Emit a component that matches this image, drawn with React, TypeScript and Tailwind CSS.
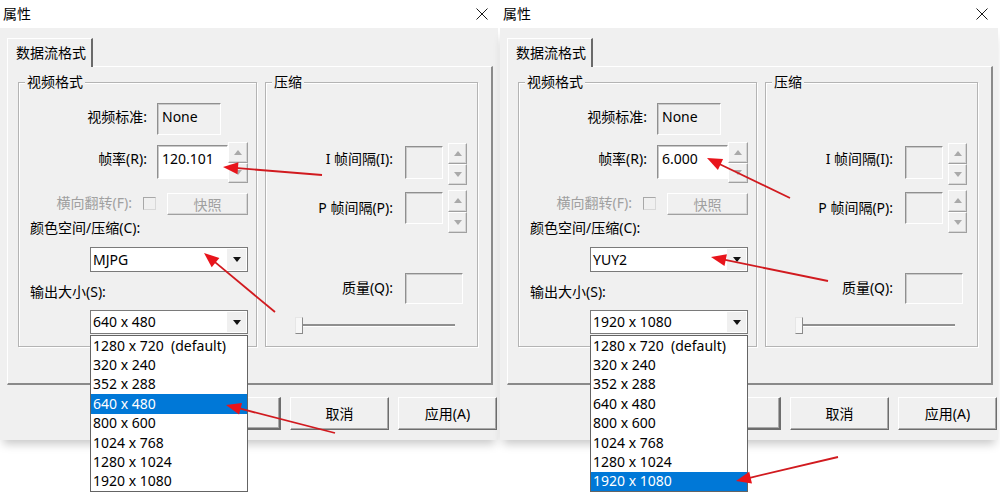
import React from "react";

const SIZES = [
  "1280 x 720  (default)",
  "320 x 240",
  "352 x 288",
  "640 x 480",
  "800 x 600",
  "1024 x 768",
  "1280 x 1024",
  "1920 x 1080",
];

// classic 3D edges
const sunken =
  "border border-t-[#8f8f8f] border-l-[#8f8f8f] border-r-white border-b-white shadow-[inset_1px_1px_0_#c9c9c9]";
const raised =
  "border border-t-white border-l-white border-r-[#a0a0a0] border-b-[#a0a0a0] shadow-[inset_-1px_-1px_0_#d6d6d6]";
const etched =
  "border border-[#b4b4b4] shadow-[inset_1px_1px_0_#ffffff,1px_1px_0_#ffffff]";

function SpinBtn({ up }: { up: boolean }) {
  return (
    <div className={`flex-1 flex items-center justify-center bg-[#f0f0f0] ${raised}`}>
      <svg width="8" height="5" viewBox="0 0 8 5">
        <polygon points={up ? "4,0 8,5 0,5" : "0,0 8,0 4,5"} fill="#a9a9a9" />
      </svg>
    </div>
  );
}

function Spinner({ className }: { className: string }) {
  return (
    <div className={`flex flex-col ${className}`}>
      <SpinBtn up />
      <SpinBtn up={false} />
    </div>
  );
}

function Combo({
  value,
  className,
  children,
}: {
  value: string;
  className: string;
  children?: React.ReactNode;
}) {
  return (
    <div className={`relative flex bg-white border border-[#7a7a7a] ${className}`}>
      <span className="flex-1 pl-[2px] flex items-center leading-[18px]">{value}</span>
      <div className="w-[19px] my-[1px] mr-[1px] flex items-center justify-center bg-[#f0f0f0]">
        <svg width="8" height="5" viewBox="0 0 8 5">
          <polygon points="0,0 8,0 4,5" fill="#111" />
        </svg>
      </div>
      {children}
    </div>
  );
}

function SizeList({ selected }: { selected: number }) {
  return (
    <div className="absolute left-[-1px] right-[-1px] top-[24px] z-20 bg-white border border-[#646464]">
      {SIZES.map((s, i) => (
        <div
          key={s}
          className={`h-[19.4px] pl-[2px] flex items-center whitespace-pre leading-[18px] ${
            i === selected ? "bg-[#0078d7] text-white" : "text-black"
          }`}
        >
          {s}
        </div>
      ))}
    </div>
  );
}

function DlgButton({ label, className }: { label: string; className?: string }) {
  return (
    <div
      className={`w-[99px] h-[33px] flex items-center justify-center bg-[#f0f0f0] border border-t-white border-l-white border-r-[#6d6d6d] border-b-[#6d6d6d] shadow-[inset_-1px_-1px_0_#a9a9a9] ${
        className ?? ""
      }`}
    >
      {label}
    </div>
  );
}

function Group({
  title,
  className,
  children,
}: {
  title: string;
  className: string;
  children: React.ReactNode;
}) {
  return (
    <div className={`relative flex flex-col ${etched} ${className}`}>
      <span className="absolute left-[6px] top-[-10px] px-[2px] bg-[#f0f0f0] leading-[18px]">
        {title}
      </span>
      {children}
    </div>
  );
}

function Dialog({
  fps,
  codec,
  size,
  selected,
}: {
  fps: string;
  codec: string;
  size: string;
  selected: number;
}) {
  return (
    <div className="w-[500px] h-[500px] flex flex-col">
      {/* title bar */}
      <div className="h-[28px] bg-white flex items-center justify-between pl-[3px] pr-[12px]">
        <span className="leading-[18px]">属性</span>
        <svg width="12" height="12" viewBox="0 0 12 12">
          <path d="M0.5 0.5 L11.5 11.5 M11.5 0.5 L0.5 11.5" stroke="#1a1a1a" strokeWidth="1" />
        </svg>
      </div>

      {/* client area */}
      <div className="relative h-[412px] w-[498px] bg-[#f0f0f0] pl-[7px] pr-[1px] pt-[10px] flex flex-col shadow-[0_7px_9px_-3px_rgba(0,0,0,0.22)]">
        {/* tab strip */}
        <div className="relative z-10 w-[86px] h-[29px] -mb-[1px] bg-[#f0f0f0] border-t border-l border-t-white border-l-white border-r-2 border-r-[#6a6a6a] pl-[8px] flex items-center leading-[18px]">
          数据流格式
        </div>

        {/* tab page */}
        <div className="w-[486px] h-[319px] border border-t-white border-l-white border-r-2 border-r-[#8a8a8a] border-b-2 border-b-[#8a8a8a] flex items-start pl-[10px] pt-[15px] gap-[8px]">
          <Group title="视频格式" className="w-[239px] h-[265px]">
            <div className="flex mt-[20px]">
              <span className="w-[128px] text-right mt-[5px] leading-[18px]">视频标准:</span>
              <div className={`ml-[10px] w-[64px] h-[32px] bg-[#f0f0f0] pl-[4px] pt-[4px] leading-[18px] ${sunken}`}>
                None
              </div>
            </div>

            <div className="flex mt-[7px]">
              <span className="w-[128px] text-right mt-[8px] leading-[18px]">帧率(R):</span>
              <div className={`ml-[10px] mt-[3px] w-[71px] h-[34px] bg-white pl-[4px] pt-[4px] leading-[18px] ${sunken}`}>
                {fps}
              </div>
              <Spinner className="w-[20px] h-[41px]" />
            </div>

            <div className="flex mt-[10px]">
              <span className="w-[113px] text-right mt-[1px] leading-[18px] text-[#a0a0a0]">横向翻转(F):</span>
              <div className="ml-[11px] mt-[4px] w-[13px] h-[13px] border border-t-[#a8a8a8] border-l-[#a8a8a8] border-r-[#d8d8d8] border-b-[#d8d8d8]" />
              <div className={`ml-[11px] w-[81px] h-[22px] flex items-center justify-center text-[#a0a0a0] bg-[#f0f0f0] ${raised}`}>
                快照
              </div>
            </div>

            <div className="ml-[11px] mt-[4px] leading-[18px]">颜色空间/压缩(C):</div>
            <Combo value={codec} className="ml-[71px] mt-[10px] w-[158px] h-[25px]" />

            <div className="ml-[11px] mt-[11px] leading-[18px]">输出大小(S):</div>
            <Combo value={size} className="ml-[71px] mt-[9px] w-[158px] h-[24px]">
              <SizeList selected={selected} />
            </Combo>
          </Group>

          <Group title="压缩" className="w-[213px] h-[265px]">
            <div className="flex mt-[60px]">
              <span className="w-[127px] text-right mt-[7px] leading-[18px]">I 帧间隔(I):</span>
              <div className={`ml-[12px] mt-[3px] w-[38px] h-[33px] bg-[#f0f0f0] ${sunken}`} />
              <Spinner className="ml-[5px] w-[19px] h-[42px]" />
            </div>

            <div className="flex mt-[5px]">
              <span className="w-[127px] text-right mt-[9px] leading-[18px]">P 帧间隔(P):</span>
              <div className={`ml-[12px] mt-[2px] w-[38px] h-[32px] bg-[#f0f0f0] ${sunken}`} />
              <Spinner className="ml-[5px] w-[19px] h-[43px]" />
            </div>

            <div className="flex mt-[40px]">
              <span className="w-[127px] text-right mt-[6px] leading-[18px]">质量(Q):</span>
              <div className={`ml-[12px] w-[58px] h-[31px] bg-[#f0f0f0] ${sunken}`} />
            </div>

            {/* trackbar */}
            <div className="flex ml-[29px] mt-[13px] h-[17px]">
              <div className="w-[8px] h-[17px] bg-[#f7f7f7] border border-t-[#e6e6e6] border-l-[#e6e6e6] border-r-[#8a8a8a] border-b-[#8a8a8a]" />
              <div className="w-[152px] h-[3px] mt-[7px] bg-[#f0f0f0] border-t-2 border-t-[#8f8f8f] border-b border-b-white" />
            </div>
          </Group>
        </div>

        {/* dialog buttons */}
        <div className="flex justify-end gap-[9px] mt-[12px]">
          <DlgButton label="确定" className="border-r-2 border-b-2 border-r-[#4a4a4a] border-b-[#4a4a4a]" />
          <DlgButton label="取消" />
          <DlgButton label="应用(A)" />
        </div>
      </div>
    </div>
  );
}

function Arrow({ x1, y1, x2, y2 }: { x1: number; y1: number; x2: number; y2: number }) {
  const dx = x2 - x1;
  const dy = y2 - y1;
  const len = Math.hypot(dx, dy);
  const ux = dx / len;
  const uy = dy / len;
  const hl = 15;
  const hw = 6;
  const bx = x2 - ux * hl;
  const by = y2 - uy * hl;
  const px = -uy;
  const py = ux;
  return (
    <g>
      <line x1={x1} y1={y1} x2={bx + ux * 3} y2={by + uy * 3} stroke="#d11a1f" strokeWidth={1.8} />
      <polygon
        points={`${x2},${y2} ${bx + px * hw},${by + py * hw} ${bx - px * hw},${by - py * hw}`}
        fill="#e8141b"
      />
    </g>
  );
}

export default function App() {
  return (
    <div className="relative w-[1000px] h-[500px] overflow-hidden bg-white flex text-[14px] text-black font-['Noto_Sans','Noto_Sans_CJK_SC',sans-serif]">
      <Dialog fps="120.101" codec="MJPG" size="640 x 480" selected={3} />
      <Dialog fps="6.000" codec="YUY2" size="1920 x 1080" selected={7} />

      {/* annotation arrows */}
      <svg className="absolute inset-0 z-30 pointer-events-none" width="1000" height="500">
        <Arrow x1={322} y1={175} x2={223} y2={167} />
        <Arrow x1={275} y1={312} x2={204} y2={253} />
        <Arrow x1={335} y1={433} x2={226} y2={405} />
        <Arrow x1={790} y1={198} x2={707} y2={158} />
        <Arrow x1={828} y1={281} x2={711} y2={257} />
        <Arrow x1={838} y1={457} x2={736} y2={481} />
      </svg>
    </div>
  );
}
